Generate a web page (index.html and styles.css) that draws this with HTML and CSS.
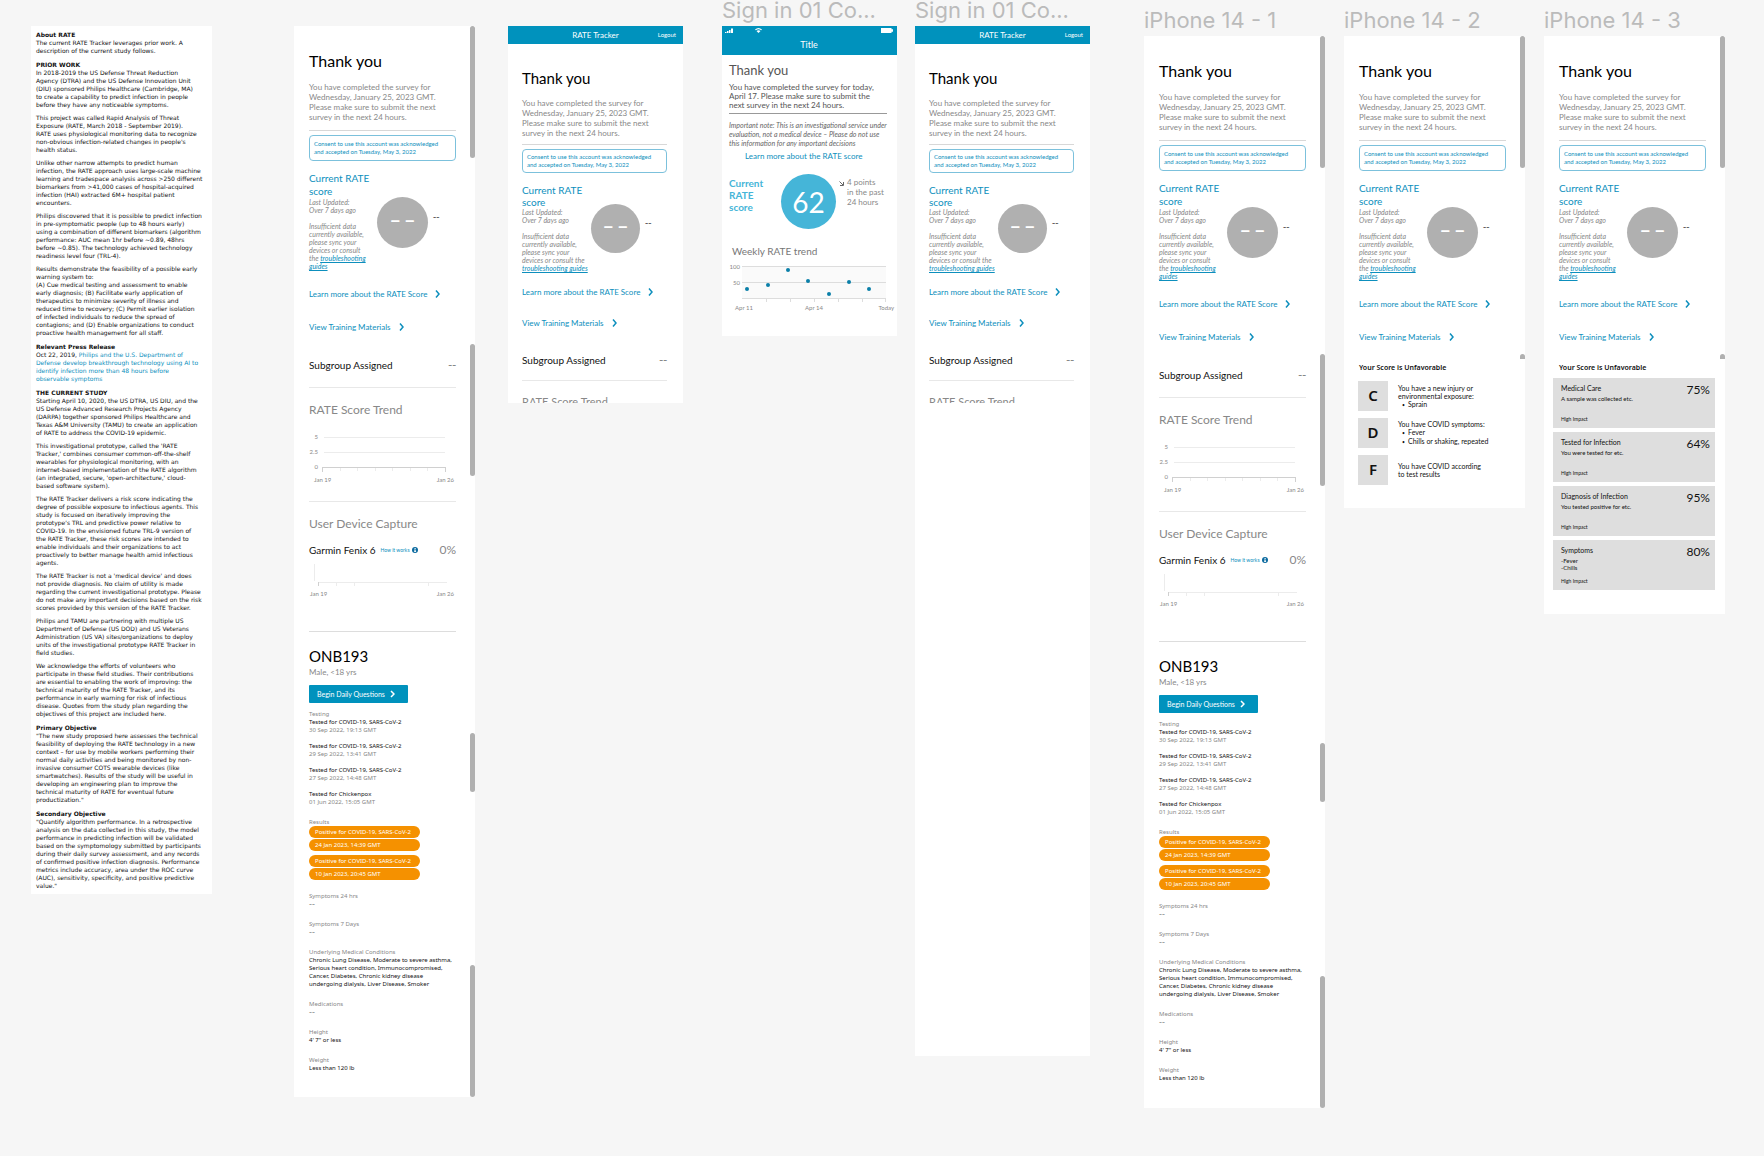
FILE: index.html
```html
<!doctype html>
<html lang="en">
  <head>
    <meta charset="UTF-8" />
    <meta name="viewport" content="width=device-width, initial-scale=1.0" />
    <title>RATE Tracker</title>
    <link rel="stylesheet" href="styles.css">
  </head>
  <body>
    <!-- top part of every survey screen -->
    <template id="thank-you">
      <h1>Thank you</h1>
      <p class="intro">You have completed the survey for Wednesday, January 25, 2023 GMT. Please make sure to submit the next survey in the next 24 hours.</p>
      <div class="consent">Consent to use this account was acknowledged and accepted on Tuesday, May 3, 2022</div>
      <div class="rate">
        <div class="rate-text">
          <h2>Current RATE score</h2>
          <p>Last Updated:<br>Over 7 days ago</p>
          <p class="rate-note">Insufficient data currently available, please sync your devices or consult the <a href="#">troubleshooting guides</a></p>
        </div>
        <div class="circle"><span>–</span><span>–</span></div>
        <span class="rate-delta">--</span>
      </div>
      <a class="more" href="#">Learn more about the RATE Score
        <svg width="5" height="8" viewBox="0 0 5 8"><path d="M1 0.5L4 4L1 7.5" /></svg></a>
      <a class="more" href="#">View Training Materials
        <svg width="5" height="8" viewBox="0 0 5 8"><path d="M1 0.5L4 4L1 7.5" /></svg></a>
    </template>

    <template id="subgroup">
      <div class="subgroup"><span>Subgroup Assigned</span><span class="muted">--</span></div>
      <h2 class="section-title">RATE Score Trend</h2>
    </template>

    <!-- charts and medical profile -->
    <template id="profile">
      <div class="trend">
        <svg class="chart" width="147" height="58" viewBox="0 0 147 58">
          <path class="grid" d="M15 7.5H136M15 22.5H136" />
          <path class="axis" d="M13 37.5H136.5M13.5 37V42M136.5 37V42" />
          <path class="grid" d="M31.5 38V41M48.5 38V41M66.5 38V41M83.5 38V41M101.5 38V41M118.5 38V41" />
          <text x="9" y="9" text-anchor="end">5</text>
          <text x="9" y="24" text-anchor="end">2.5</text>
          <text x="9" y="39" text-anchor="end">0</text>
          <text class="date" x="5" y="52">Jan 19</text>
          <text class="date" x="145" y="52" text-anchor="end">Jan 26</text>
        </svg>
      </div>
      <h2 class="section-title">User Device Capture</h2>
      <div class="device">
        <span>Garmin Fenix 6</span>
        <a href="#">How it works
          <svg width="6" height="6" viewBox="0 0 12 12"><circle cx="6" cy="6" r="6" /><path d="M5 2h2.4v2H5zM4.4 5h3v3.6h.8V10H4.2V8.6h.8V6.4h-.6z" fill="#fff" /></svg></a>
        <strong>0%</strong>
      </div>
      <div class="capture">
        <svg class="chart" width="147" height="40" viewBox="0 0 147 40">
          <path class="grid" d="M5.5 2V19M9 20.5H138M27.5 21V24M45.5 21V24M119.5 21V24" />
          <path class="axis" d="M9.5 20V24" />
          <text class="date" x="1" y="34">Jan 19</text>
          <text class="date" x="145" y="34" text-anchor="end">Jan 26</text>
        </svg>
      </div>
      <h2 class="patient">ONB193</h2>
      <p class="patient-info">Male, &lt;18 yrs</p>
      <button class="begin" type="button">Begin Daily Questions
        <svg width="5" height="8" viewBox="0 0 5 8"><path d="M1 1L4 4L1 7" /></svg></button>
      <dl class="details">
        <div class="tests">
          <dt>Testing</dt>
          <dd>Tested for COVID-19, SARS-CoV-2<small>30 Sep 2022, 19:13 GMT</small></dd>
          <dd>Tested for COVID-19, SARS-CoV-2<small>29 Sep 2022, 13:41 GMT</small></dd>
          <dd>Tested for COVID-19, SARS-CoV-2<small>27 Sep 2022, 14:48 GMT</small></dd>
          <dd>Tested for Chickenpox<small>01 Jun 2022, 15:05 GMT</small></dd>
        </div>
        <div class="results">
          <dt>Results</dt>
          <dd><span>Positive for COVID-19, SARS-CoV-2</span><span>24 Jan 2023, 14:39 GMT</span></dd>
          <dd><span>Positive for COVID-19, SARS-CoV-2</span><span>10 Jan 2023, 20:45 GMT</span></dd>
        </div>
        <div><dt>Symptoms 24 hrs</dt><dd class="muted">--</dd></div>
        <div><dt>Symptoms 7 Days</dt><dd class="muted">--</dd></div>
        <div>
          <dt>Underlying Medical Conditions</dt>
          <dd>Chronic Lung Disease, Moderate to severe asthma,
            Serious heart condition, Immunocompromised,
            Cancer, Diabetes, Chronic kidney disease
            undergoing dialysis, Liver Disease, Smoker</dd>
        </div>
        <div><dt>Medications</dt><dd class="muted">--</dd></div>
        <div><dt>Height</dt><dd>4' 7" or less</dd></div>
        <div><dt>Weight</dt><dd>Less than 120 lb</dd></div>
      </dl>
    </template>

    <main class="canvas">
      <section class="board about">
        <div>
          <h3>About RATE</h3>
          <p>The current RATE Tracker leverages prior work. A
            description of the current study follows.</p>
        </div>
        <div>
          <h3>PRIOR WORK</h3>
          <p>In 2018-2019 the US Defense Threat Reduction
            Agency (DTRA) and the US Defense Innovation Unit
            (DIU) sponsored Philips Healthcare (Cambridge, MA)
            to create a capability to predict infection in people
            before they have any noticeable symptoms.</p>
          <p>This project was called Rapid Analysis of Threat
            Exposure (RATE, March 2018 - September 2019).
            RATE uses physiological monitoring data to recognize
            non-obvious infection-related changes in people's
            health status.</p>
          <p>Unlike other narrow attempts to predict human
            infection, the RATE approach uses large-scale machine
            learning and tradespace analysis across &gt;250 different
            biomarkers from &gt;41,000 cases of hospital-acquired
            infection (HAI) extracted 6M+ hospital patient
            encounters.</p>
          <p>Philips discovered that it is possible to predict infection
            in pre-symptomatic people (up to 48 hours early)
            using a combination of different biomarkers (algorithm
            performance: AUC mean 1hr before ~0.89, 48hrs
            before ~0.85). The technology achieved technology
            readiness level four (TRL-4).</p>
          <p>Results demonstrate the feasibility of a possible early
            warning system to:
            (A) Cue medical testing and assessment to enable
            early diagnosis; (B) Facilitate early application of
            therapeutics to minimize severity of illness and
            reduced time to recovery; (C) Permit earlier isolation
            of infected individuals to reduce the spread of
            contagions; and (D) Enable organizations to conduct
            proactive health management for all staff.</p>
        </div>
        <div>
          <h3>Relevant Press Release</h3>
          <p>Oct 22, 2019, <a href="#">Philips and the U.S. Department of
            Defense develop breakthrough technology using AI to
            identify infection more than 48 hours before
            observable symptoms</a></p>
        </div>
        <div>
          <h3>THE CURRENT STUDY</h3>
          <p>Starting April 10, 2020, the US DTRA, US DIU, and the
            US Defense Advanced Research Projects Agency
            (DARPA) together sponsored Philips Healthcare and
            Texas A&amp;M University (TAMU) to create an application
            of RATE to address the COVID-19 epidemic.</p>
          <p>This investigational prototype, called the 'RATE
            Tracker,' combines consumer common-off-the-shelf
            wearables for physiological monitoring, with an
            internet-based implementation of the RATE algorithm
            (an integrated, secure, 'open-architecture,' cloud-
            based software system).</p>
          <p>The RATE Tracker delivers a risk score indicating the
            degree of possible exposure to infectious agents. This
            study is focused on iteratively improving the
            prototype's TRL and predictive power relative to
            COVID-19. In the envisioned future TRL-9 version of
            the RATE Tracker, these risk scores are intended to
            enable individuals and their organizations to act
            proactively to better manage health amid infectious
            agents.</p>
          <p>The RATE Tracker is not a 'medical device' and does
            not provide diagnosis. No claim of utility is made
            regarding the current investigational prototype. Please
            do not make any important decisions based on the risk
            scores provided by this version of the RATE Tracker.</p>
          <p>Philips and TAMU are partnering with multiple US
            Department of Defense (US DOD) and US Veterans
            Administration (US VA) sites/organizations to deploy
            units of the investigational prototype RATE Tracker in
            field studies.</p>
          <p>We acknowledge the efforts of volunteers who
            participate in these field studies. Their contributions
            are essential to enabling the work of improving: the
            technical maturity of the RATE Tracker, and its
            performance in early warning for risk of infectious
            disease. Quotes from the study plan regarding the
            objectives of this project are included here.</p>
        </div>
        <div>
          <h3>Primary Objective</h3>
          <p>"The new study proposed here assesses the technical
            feasibility of deploying the RATE technology in a new
            context – for use by mobile workers performing their
            normal daily activities and being monitored by non-
            invasive consumer COTS wearable devices (like
            smartwatches). Results of the study will be useful in
            developing an engineering plan to improve the
            technical maturity of RATE for eventual future
            productization."</p>
        </div>
        <div>
          <h3>Secondary Objective</h3>
          <p>"Quantify algorithm performance. In a retrospective
            analysis on the data collected in this study, the model
            performance in predicting infection will be validated
            based on the symptomology submitted by participants
            during their daily survey assessment, and any records
            of confirmed positive infection diagnosis. Performance
            metrics include accuracy, area under the ROC curve
            (AUC), sensitivity, specificity, and positive predictive
            value."</p>
        </div>
      </section>

      <section class="board phone full-a">
        <div data-use="thank-you"></div>
        <div data-use="subgroup"></div>
        <div data-use="profile"></div>
        <i class="bar bar-1"></i><i class="bar bar-2"></i><i class="bar bar-3"></i><i class="bar bar-4"></i>
      </section>

      <section class="board compact short-a">
        <header class="topbar"><span>RATE Tracker</span><a href="#">Logout</a></header>
        <div class="viewport">
          <div data-use="thank-you"></div>
          <div data-use="subgroup"></div>
        </div>
      </section>

      <section class="board classic">
        <span class="board-name">Sign in 01 Co...</span>
        <header class="statusbar">
          <div class="status-icons">
            <svg width="9" height="5" viewBox="0 0 9 5"><path d="M0 4h1.5v1H0zM2 3h1.5v2H2zM4 2h1.5v3H4zM6 0.5h2v4.5H6z" /></svg>
            <svg width="7" height="5" viewBox="0 0 14 10"><path d="M0 3Q7-3 14 3L12.5 4.6Q7 0 1.5 4.6zM3 6Q7 2.5 11 6L7 10z" /></svg>
            <svg width="12" height="5" viewBox="0 0 12 5"><path d="M0 0h10.5v1.2H12v2.6h-1.5V5H0z" /></svg>
          </div>
          <div class="title">Title</div>
        </header>
        <div class="classic-body">
          <h1>Thank you</h1>
          <p class="done">You have completed the survey for today,
            April 17. Please make sure to submit the
            next survey in the next 24 hours.</p>
          <p class="note">Important note: This is an investigational service under
            evaluation, not a medical device – Please do not use
            this information for any important decisions</p>
          <a class="learn" href="#">Learn more about the RATE score</a>
          <div class="score">
            <h2>Current<br>RATE<br>score</h2>
            <div class="score-circle">62</div>
            <svg width="5" height="5" viewBox="0 0 5 5"><path d="M0.5 0.5L4 4M4.5 1V4.5H1" /></svg>
            <p>4 points<br>in the past<br>24 hours</p>
          </div>
          <h2 class="weekly">Weekly RATE trend</h2>
          <svg class="chart" width="166" height="52" viewBox="0 0 166 52">
            <path d="M12 5H156V37H12z" fill="#fafafa" />
            <path class="line" d="M12 5.5H156M12 21.5H156M12 37.5H156" />
            <path class="line" d="M36.5 38V41M60.5 38V41M84.5 38V41M108.5 38V41M132.5 38V41M155.5 38V41" />
            <g class="dots">
              <circle cx="17" cy="28" r="2" /><circle cx="38" cy="24" r="2" /><circle cx="58" cy="9" r="2" />
              <circle cx="78" cy="20" r="2" /><circle cx="99" cy="33" r="2" /><circle cx="119" cy="21" r="2" /><circle cx="139" cy="28" r="2" />
            </g>
            <text x="10" y="8" text-anchor="end">100</text>
            <text x="10" y="24" text-anchor="end">50</text>
            <text class="date" x="5" y="49">Apr 11</text>
            <text class="date" x="84" y="49" text-anchor="middle">Apr 14</text>
            <text class="date" x="164" y="49" text-anchor="end">Today</text>
          </svg>
        </div>
      </section>

      <section class="board compact short-b">
        <span class="board-name">Sign in 01 Co...</span>
        <header class="topbar"><span>RATE Tracker</span><a href="#">Logout</a></header>
        <div class="viewport">
          <div data-use="thank-you"></div>
          <div data-use="subgroup"></div>
        </div>
      </section>

      <section class="board phone full-b">
        <span class="board-name">iPhone 14 - 1</span>
        <div data-use="thank-you"></div>
        <div data-use="subgroup"></div>
        <div data-use="profile"></div>
        <i class="bar bar-1"></i><i class="bar bar-2"></i><i class="bar bar-3"></i><i class="bar bar-4"></i>
      </section>

      <section class="board phone grades">
        <span class="board-name">iPhone 14 - 2</span>
        <div data-use="thank-you"></div>
        <h3 class="verdict">Your Score is Unfavorable</h3>
        <div class="grade"><b>C</b><div>You have a new injury or<br>environmental exposure:<ul><li>Sprain</li></ul></div></div>
        <div class="grade"><b>D</b><div>You have COVID symptoms:<ul><li>Fever</li><li>Chills or shaking, repeated</li></ul></div></div>
        <div class="grade"><b>F</b><div>You have COVID according<br>to test results</div></div>
        <i class="bar bar-1"></i><i class="bar bar-stub"></i>
      </section>

      <section class="board phone factors">
        <span class="board-name">iPhone 14 - 3</span>
        <div data-use="thank-you"></div>
        <h3 class="verdict">Your Score is Unfavorable</h3>
        <div class="factor-list">
          <div class="factor"><h4>Medical Care</h4><strong>75%</strong><p>A sample was collected etc.</p><small>High Impact</small></div>
          <div class="factor"><h4>Tested for Infection</h4><strong>64%</strong><p>You were tested for etc.</p><small>High Impact</small></div>
          <div class="factor"><h4>Diagnosis of Infection</h4><strong>95%</strong><p>You tested positive for etc.</p><small>High Impact</small></div>
          <div class="factor"><h4>Symptoms</h4><strong>80%</strong><p>-Fever<br>-Chills</p><small>High Impact</small></div>
        </div>
        <i class="bar bar-1"></i><i class="bar bar-stub"></i>
      </section>
    </main>
    <script>
      // fill each placeholder with its shared block
      document.querySelectorAll("[data-use]").forEach((slot) => {
        const block = document.getElementById(slot.dataset.use);
        slot.append(block.content.cloneNode(true));
      });
    </script>
  </body>
</html>
```

FILE: styles.css
```css
* {
  margin: 0;
  padding: 0;
  box-sizing: border-box;
}
body {
  background-color: #f6f6f6;
  color: #111;
  font-family: "Lato", "Noto Sans", sans-serif;
  font-size: 8px;
  line-height: 10px;
}
a {
  color: #0d8fbd;
  text-decoration: none;
}
h1, h2, h3, h4 {
  font-weight: normal;
}
svg {
  display: block;
}
.canvas {
  position: relative;
  min-height: 100vh;
}

/* artboards on the free canvas */
.board {
  position: absolute;
  top: 26px;
  background-color: #fff;
}
.board-name {
  position: absolute;
  left: 0;
  bottom: 100%;
  font-family: "Inter", sans-serif;
  font-size: 22px;
  line-height: 32px;
  color: #bbb;
  white-space: nowrap;
}
.about { left: 31px; width: 181px; }
.full-a { left: 294px; height: 1071px; }
.short-a { left: 508px; }
.classic { left: 722px; width: 175px; height: 310px; }
.short-b { left: 915px; height: 1030px; }
.full-b { left: 1144px; top: 36px; height: 1072px; }
.grades { left: 1344px; top: 36px; height: 472px; }
.factors { left: 1544px; top: 36px; height: 578px; }

/* about text */
.about {
  padding: 5px 5px 4px;
  font-family: "DejaVu Sans", sans-serif;
  font-size: 6px;
  line-height: 8px;
  white-space: nowrap;
}
.about > div + div {
  margin-top: 6px;
}
.about h3 {
  font-size: 6px;
  font-weight: bold;
}
.about p {
  white-space: pre-line;
  width: max-content;
}
.about p + p {
  margin-top: 5px;
}

/* survey screens */
.phone {
  width: 181px;
  padding: 25px 19px 0 15px;
}
.compact {
  width: 175px;
}
.viewport {
  height: 359px;
  padding: 24px 16px 0 14px;
  overflow: hidden;
}
.topbar {
  display: grid;
  grid-template-columns: 1fr auto 1fr;
  align-items: center;
  height: 18px;
  padding: 0 7px;
  background-color: #0092bd;
  color: #fff;
}
.topbar span {
  grid-column: 2;
}
.topbar a {
  justify-self: end;
  color: #fff;
  font-size: 6px;
}
h1 {
  font-size: 16px;
  line-height: 20px;
  color: #000;
}
.intro {
  margin-top: 11px;
  padding-bottom: 8px;
  border-bottom: 1px solid #d8d8d8;
  color: #888;
}
.consent {
  margin-top: 4px;
  padding: 4px 8px 4px 4px;
  border: 1px solid #7cc1dc;
  border-radius: 4px;
  color: #0d8fbd;
  font-size: 6px;
  line-height: 8px;
}
.rate {
  display: flex;
  align-items: flex-start;
  margin-top: 11px;
  color: #888;
}
.rate-text {
  width: 62px;
  margin-right: 6px;
  font-size: 7px;
  line-height: 8px;
  font-style: italic;
}
.rate-text h2 {
  font-size: 10px;
  line-height: 13px;
  font-style: normal;
  color: #0d8fbd;
}
.rate-note {
  margin-top: 8px;
}
.rate-note a {
  text-decoration: underline;
  text-underline-offset: 1px;
}
.circle {
  display: flex;
  align-items: center;
  justify-content: center;
  gap: 3px;
  width: 51px;
  height: 51px;
  margin-top: 25px;
  padding-bottom: 8px;
  border-radius: 50%;
  background-color: #b0b0b0;
  color: #fff;
  font-size: 20px;
  font-weight: bold;
}
.rate-delta {
  margin: 39px 0 0 5px;
  color: #555;
  font-family: "Noto Sans", sans-serif;
  font-size: 10px;
}
.more {
  display: flex;
  align-items: center;
  gap: 8px;
  margin-top: 23px;
  width: max-content;
}
.rate + .more {
  margin-top: 19px;
}
.more path {
  fill: none;
  stroke: #0d8fbd;
  stroke-width: 1.5;
}
.subgroup {
  display: flex;
  justify-content: space-between;
  margin-top: 27px;
  padding-bottom: 16px;
  border-bottom: 1px solid #e8e8e8;
  font-size: 10px;
  line-height: 12px;
}
.muted {
  color: #888;
}
.subgroup .muted {
  font-family: "Noto Sans", sans-serif;
  font-size: 12px;
}
.section-title {
  margin-top: 15px;
  font-size: 12px;
  line-height: 14px;
  color: #888;
}

/* tighter spacing of the web view */
.compact h1 {
  font-size: 15px;
}
.compact .intro {
  margin-top: 10px;
  padding-bottom: 6px;
}
.compact .consent {
  padding: 3px 4px;
}
.compact .rate-text {
  width: 67px;
  margin-right: 2px;
}
.compact .rate-text h2 {
  line-height: 12px;
}
.compact .circle {
  width: 49px;
  height: 49px;
  margin-top: 20px;
}
.compact .rate-delta {
  margin-top: 33px;
}
.compact .more {
  margin-top: 21px;
}
.compact .rate + .more {
  margin-top: 15px;
}
.compact .subgroup {
  margin-top: 26px;
  padding-bottom: 14px;
}
.compact .section-title {
  font-size: 11px;
  margin-top: 14px;
}

/* charts */
.chart {
  overflow: visible;
}
.chart text {
  font-size: 6px;
  fill: #888;
}
.grid {
  stroke: #ececec;
}
.axis {
  stroke: #d0d0d0;
}
.trend {
  margin-top: 13px;
  padding-bottom: 13px;
  border-bottom: 1px solid #e8e8e8;
}
.capture {
  margin-top: 6px;
  padding-bottom: 29px;
  border-bottom: 1px solid #ddd;
}
.device {
  display: flex;
  align-items: center;
  gap: 5px;
  margin-top: 13px;
  font-size: 10px;
  line-height: 12px;
}
.device a {
  display: flex;
  align-items: center;
  gap: 2px;
  font-size: 5px;
}
.device circle {
  fill: #0b6a9f;
}
.device strong {
  margin-left: auto;
  font-size: 12px;
  font-weight: normal;
  color: #888;
}

/* patient */
.patient {
  margin-top: 15px;
  font-size: 15px;
  line-height: 18px;
  color: #000;
}
.patient-info {
  margin-top: 2px;
  color: #888;
}
.begin {
  display: flex;
  align-items: center;
  gap: 5px;
  width: 99px;
  height: 18px;
  margin-top: 8px;
  padding: 0 8px;
  border: none;
  border-radius: 1px;
  background-color: #0092bd;
  color: #fff;
  font-family: inherit;
  font-size: 7px;
}
.begin path {
  fill: none;
  stroke: #fff;
  stroke-width: 1.5;
}
.details {
  display: flex;
  flex-direction: column;
  gap: 12px;
  margin-top: 7px;
  font-family: "Noto Sans", sans-serif;
  font-size: 6px;
  line-height: 8px;
}
.details > div,
.details dd {
  white-space: nowrap;
}
.details > div > dd:only-of-type {
  white-space: pre-line;
  width: max-content;
}
.details dt,
.details small {
  color: #888;
  font-size: 6px;
}
.details small {
  display: block;
}
.details .muted {
  font-size: 9px;
}
.tests dd + dd {
  margin-top: 8px;
}
.results dd + dd {
  margin-top: 4px;
}
.results span {
  display: block;
  width: 111px;
  height: 12px;
  padding: 0 6px;
  border-radius: 6px;
  line-height: 12px;
  background-color: #f59100;
  color: #fff;
}
.results span + span {
  margin-top: 1px;
}

/* scroll bars beside the content */
.bar {
  position: absolute;
  right: 0;
  width: 5px;
  height: 132px;
  border-radius: 3px;
  background-color: #b0b0b0;
}
.bar-1 { top: 0; }
.bar-2 { top: 318px; }
.bar-3 { top: 707px; height: 59px; }
.bar-4 { bottom: 0; }
.bar-stub {
  top: 318px;
  height: 5px;
  border-radius: 3px 3px 0 0;
}

/* older sign-in screen */
.statusbar {
  height: 29px;
  padding: 2px 4px 0 3px;
  background-color: #0092bd;
  color: #fff;
}
.status-icons {
  display: grid;
  grid-template-columns: 30px 1fr auto;
  fill: #fff;
}
.title {
  padding-top: 6px;
  font-size: 9px;
  line-height: 12px;
  text-align: center;
}
.classic-body {
  padding: 6px 3px 0 7px;
}
.classic h1 {
  font-size: 13px;
  line-height: 18px;
  color: #555;
}
.done {
  margin-top: 4px;
  padding-bottom: 3px;
  border-bottom: 1px solid #999;
  width: 158px;
  line-height: 9px;
  white-space: pre-line;
  color: #555;
}
.note {
  margin-top: 7px;
  font-size: 7px;
  line-height: 9px;
  font-style: italic;
  white-space: pre-line;
  color: #666;
}
.learn {
  display: block;
  margin: 3px 0 0 16px;
}
.score {
  display: flex;
  align-items: flex-start;
  margin-top: 13px;
  color: #888;
}
.score h2 {
  width: 52px;
  margin-top: 3px;
  font-size: 10px;
  font-weight: bold;
  line-height: 12px;
  color: #45b5d8;
}
.score-circle {
  width: 55px;
  height: 55px;
  border-radius: 50%;
  background-color: #45b5d8;
  color: #fff;
  font-size: 28px;
  line-height: 57px;
  text-align: center;
}
.score svg {
  margin: 7px 3px 0;
  fill: none;
  stroke: #666;
}
.score p {
  margin-top: 3px;
}
.weekly {
  margin: 16px 0 0 3px;
  font-size: 10px;
  line-height: 12px;
  color: #777;
}
.classic .chart {
  margin: 4px 0 0 1px;
}
.line {
  stroke: #ddd;
}
.dots {
  fill: #0a7fa8;
}

/* score verdict */
.verdict {
  margin-top: 21px;
  font-family: "Noto Sans", sans-serif;
  font-size: 7px;
  font-weight: 600;
}
.grade {
  display: flex;
  align-items: center;
  gap: 10px;
  margin: 7px 0 0 -1px;
  font-size: 7px;
  line-height: 8px;
}
.verdict + .grade {
  margin-top: 8px;
}
.grade b {
  width: 30px;
  height: 30px;
  background-color: #dedede;
  font-family: "Noto Sans", sans-serif;
  font-size: 15px;
  font-weight: 600;
  line-height: 29px;
  text-align: center;
}
.grade ul {
  padding-left: 10px;
  list-style: none;
}
.grade li::before {
  content: "•";
  display: inline-block;
  width: 6px;
  margin-left: -6px;
  font-size: 5px;
}
.factor-list {
  display: flex;
  flex-direction: column;
  gap: 4px;
  margin: 5px -9px 0 -6px;
}
.factor {
  display: grid;
  grid-template-columns: 1fr auto;
  grid-template-rows: 10px 22px 8px;
  height: 50px;
  padding: 5px 5px 5px 8px;
  background-color: #dedede;
  font-size: 6px;
  line-height: 7px;
}
.factor h4 {
  font-size: 7px;
  line-height: 10px;
}
.factor strong {
  font-size: 12px;
  font-weight: normal;
  line-height: 14px;
  height: 10px;
}
.factor p {
  grid-column: 1;
  margin-top: 2px;
}
.factor small {
  grid-column: 1;
  font-size: 5px;
  line-height: 8px;
}
```
